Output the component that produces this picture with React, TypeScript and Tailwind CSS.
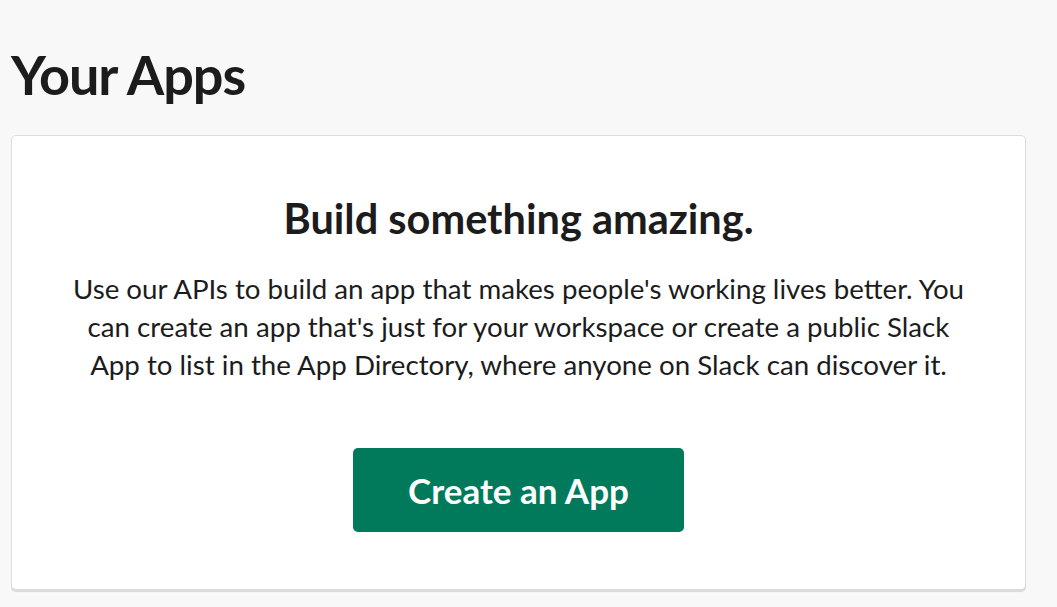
export default function App() {
  return (
    <div className="min-h-screen bg-[#f8f8f8] text-[#1d1c1d] font-['Lato',sans-serif] pl-[11px] pr-[31px] pt-[42px]">
      <h1 className="text-[54px] font-bold leading-[66px] tracking-[-1px]">Your Apps</h1>
      <div className="mt-[27px] bg-white border border-[#dddddd] rounded-[5px] shadow-[0_2px_1px_rgba(0,0,0,0.12)] flex flex-col items-center pt-[58px] pb-[57px]">
        <h2 className="text-[41.5px] font-bold leading-[48px]">Build something amazing.</h2>
        <p className="mt-[28px] text-[27.7px] leading-[38px] text-center w-[900px]">
          Use our APIs to build an app that makes people's working lives better. You can create an app that's just for your workspace or create a public Slack App to list in the App Directory, where anyone on Slack can discover it.
        </p>
        <button className="mt-[64px] w-[331px] h-[84px] bg-[#007a5a] rounded-[5px] text-white text-[35px] font-bold">
          Create an App
        </button>
      </div>
    </div>
  );
}
